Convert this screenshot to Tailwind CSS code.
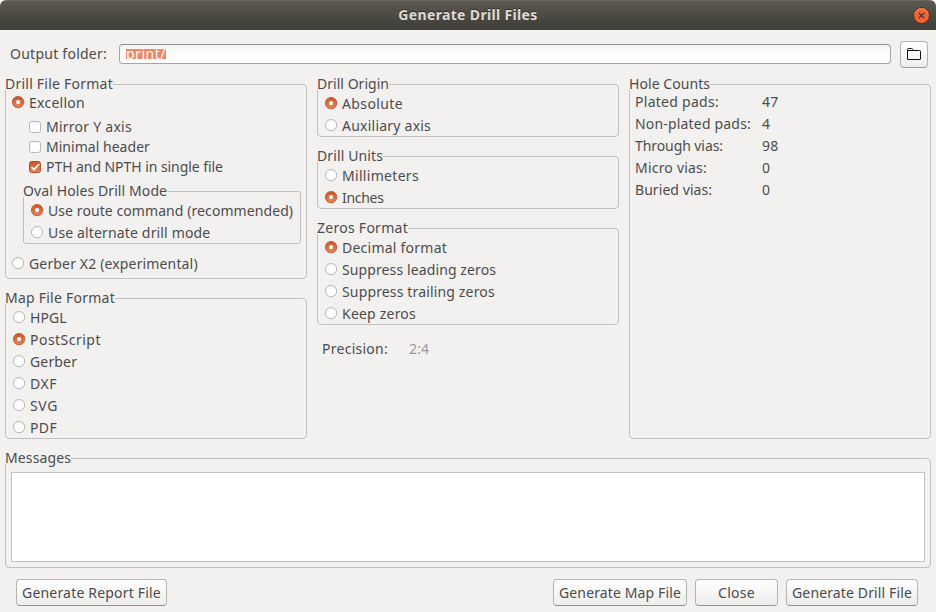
<!DOCTYPE html>
<html lang="en">
<head>
<meta charset="utf-8">
<title>Generate Drill Files</title>
<script src="https://cdn.jsdelivr.net/npm/@tailwindcss/browser@4"></script>
</head>
<body class="bg-white">
<svg class="absolute size-0">
  <defs>
    <linearGradient id="on" x1="0" y1="0" x2="0" y2="1"><stop offset="0" stop-color="#cc531f"/><stop offset="1" stop-color="#e58660"/></linearGradient>
    <linearGradient id="off" x1="0" y1="0" x2="0" y2="1"><stop offset="0" stop-color="#f6f6f5"/><stop offset=".4" stop-color="#ffffff"/></linearGradient>
    <symbol id="radio-on" viewBox="0 0 13 13"><circle cx="6.1" cy="6.1" r="5.7" fill="url(#on)" stroke="#b5512a" stroke-width=".8"/><circle cx="6.1" cy="6.1" r="2.1" fill="#fff"/></symbol>
    <symbol id="radio-off" viewBox="0 0 13 13"><circle cx="6.1" cy="6.1" r="5.6" fill="url(#off)" stroke="#b9b8b6" stroke-width="1"/></symbol>
    <symbol id="check-off" viewBox="0 0 13 13"><rect x=".5" y=".5" width="11" height="11" rx="2.2" fill="url(#off)" stroke="#b9b8b6"/></symbol>
    <symbol id="check-on" viewBox="0 0 13 13"><rect x=".5" y=".5" width="11" height="11" rx="2.2" fill="url(#on)" stroke="#b5512a"/><path d="M2.5 6.2 5 8.6 10.2 3" fill="none" stroke="#fff" stroke-width="1.7"/></symbol>
  </defs>
</svg>
<div class="flex h-[612px] w-[936px] flex-col overflow-hidden rounded-t-[6px] bg-[#f2f1f0] font-['Noto_Sans','Open_Sans',sans-serif] text-[14px] tracking-[0.15px] whitespace-nowrap text-[#4c4c4c]">
  <header class="grid h-[30px] shrink-0 grid-cols-[1fr_auto_1fr] items-center border-t border-[#6b6961] bg-linear-to-b from-[#5b5950] to-[#3d3c37] pr-[6px]">
    <span></span>
    <h1 class="-mt-[2px] pl-[6px] text-[14px] leading-[20px] font-bold tracking-[0.34px] text-[#dfdbd2] [text-shadow:0_-1px_0_#2f2e2a]">Generate Drill Files</h1>
    <svg class="-mt-[1px] size-[17px] justify-self-end" viewBox="0 0 17 17"><circle cx="8.5" cy="8.5" r="8" fill="#ee6233" stroke="#34332f"/><path d="M1.8 7a6.9 6.9 0 0 1 13.4 0" fill="none" stroke="#f6936c" stroke-width=".9"/><path d="M5.8 5.8l5.4 5.4M11.2 5.8l-5.4 5.4" stroke="#3d302a" stroke-width="1.2"/></svg>
  </header>

  <div class="flex h-[49px] shrink-0 items-center pr-[8px] pl-[10px]">
    <span class="-mt-[2px] w-[109px] tracking-[0.25px]">Output folder:</span>
    <div class="mb-[1px] flex h-[20px] w-[772px] items-center rounded-[4px] border border-[#a5a5a4] border-t-[#8f8f8e] bg-linear-to-b from-[#f3f3f3] to-white to-60% pl-[6px]">
      <span class="h-[10px] w-[40px] overflow-hidden bg-[#f08763] leading-[9px] tracking-[0.5px] text-white">print/</span>
    </div>
    <button class="ml-auto flex h-[27px] w-[28px] items-center justify-center rounded-[4px] border border-[#b4b3b1] border-b-[#9c9b99] bg-linear-to-b from-white to-[#ededec]">
      <svg class="mb-[1px] h-[12px] w-[14px]" viewBox="0 0 14 12" fill="none" stroke="#111" stroke-width="1"><path d="M.5 11v-9.5q0-1 1-1h3q.8 0 1.2 1l.6 1h6.2q1 0 1 1v7.5q0 .5-.5.5h-12q-.5 0-.5-.5zM.5 2.5h6"/></svg>
    </button>
  </div>

  <main class="flex h-[374px] shrink-0 gap-[10px] px-[5px]">
    <div class="flex w-[302px] flex-col gap-[14px]">
      <fieldset class="h-[200px] rounded-[4px] border border-[#c3c1bf] pl-[6px]">
        <legend class="-ml-[7px] h-[11px] leading-[9px] tracking-[0.23px]">Drill File Format</legend>
        <label class="flex h-[22px] items-center gap-[4px] pt-[2px]"><svg class="mt-[1px] size-[13px]"><use href="#radio-on"/></svg><span class="tracking-[0.27px]">Excellon</span></label>
        <div class="flex flex-col pt-[4px] pl-[17px]">
          <label class="flex h-[20px] items-center gap-[4px]"><svg class="mt-[2px] size-[13px]"><use href="#check-off"/></svg><span class="tracking-[0.25px]">Mirror Y axis</span></label>
          <label class="flex h-[20px] items-center gap-[4px]"><svg class="mt-[2px] size-[13px]"><use href="#check-off"/></svg><span class="tracking-[0.03px]">Minimal header</span></label>
          <label class="flex h-[20px] items-center gap-[4px]"><svg class="mt-[2px] size-[13px]"><use href="#check-on"/></svg><span class="tracking-[-0.06px]">PTH and NPTH in single file</span></label>
        </div>
        <fieldset class="mt-[10px] ml-[11px] h-[58px] w-[278px] rounded-[3px] border border-[#c3c1bf] pt-[2px] pl-[7px]">
          <legend class="-ml-[8px] h-[11px] leading-[9px] tracking-[0.1px]">Oval Holes Drill Mode</legend>
          <label class="flex h-[22px] items-center gap-[4px]"><svg class="size-[13px]"><use href="#radio-on"/></svg><span class="tracking-[0.08px]">Use route command (recommended)</span></label>
          <label class="flex h-[22px] items-center gap-[4px]"><svg class="size-[13px]"><use href="#radio-off"/></svg><span>Use alternate drill mode</span></label>
        </fieldset>
        <label class="mt-[8px] flex h-[22px] items-center gap-[4px]"><svg class="size-[13px]"><use href="#radio-off"/></svg><span>Gerber X2 (experimental)</span></label>
      </fieldset>
      <fieldset class="h-[146px] rounded-[4px] border border-[#c3c1bf] pt-[2px] pl-[7px]">
        <legend class="-ml-[8px] h-[11px] leading-[9px] tracking-[0.24px]">Map File Format</legend>
        <label class="flex h-[22px] items-center gap-[4px]"><svg class="size-[13px]"><use href="#radio-off"/></svg><span class="tracking-[0.05px]">HPGL</span></label>
        <label class="flex h-[22px] items-center gap-[4px]"><svg class="size-[13px]"><use href="#radio-on"/></svg><span class="tracking-[0.48px]">PostScript</span></label>
        <label class="flex h-[22px] items-center gap-[4px]"><svg class="size-[13px]"><use href="#radio-off"/></svg><span>Gerber</span></label>
        <label class="flex h-[22px] items-center gap-[4px]"><svg class="size-[13px]"><use href="#radio-off"/></svg><span class="tracking-[0.5px]">DXF</span></label>
        <label class="flex h-[22px] items-center gap-[4px]"><svg class="size-[13px]"><use href="#radio-off"/></svg><span class="tracking-[0.6px]">SVG</span></label>
        <label class="flex h-[22px] items-center gap-[4px]"><svg class="size-[13px]"><use href="#radio-off"/></svg><span class="tracking-[0.35px]">PDF</span></label>
      </fieldset>
    </div>

    <div class="flex w-[302px] flex-col gap-[14px]">
      <fieldset class="h-[58px] rounded-[4px] border border-[#c3c1bf] pt-[2px] pl-[7px]">
        <legend class="-ml-[8px] h-[11px] leading-[9px] tracking-[0.03px]">Drill Origin</legend>
        <label class="flex h-[22px] items-center gap-[4px]"><svg class="size-[13px]"><use href="#radio-on"/></svg><span class="tracking-[0.38px]">Absolute</span></label>
        <label class="flex h-[22px] items-center gap-[4px]"><svg class="size-[13px]"><use href="#radio-off"/></svg><span class="tracking-[0.23px]">Auxiliary axis</span></label>
      </fieldset>
      <fieldset class="h-[58px] rounded-[4px] border border-[#c3c1bf] pt-[2px] pl-[7px]">
        <legend class="-ml-[8px] h-[11px] leading-[9px] tracking-[0.11px]">Drill Units</legend>
        <label class="flex h-[22px] items-center gap-[4px]"><svg class="size-[13px]"><use href="#radio-off"/></svg><span class="tracking-[0.31px]">Millimeters</span></label>
        <label class="flex h-[22px] items-center gap-[4px]"><svg class="size-[13px]"><use href="#radio-on"/></svg><span class="tracking-[-0.3px]">Inches</span></label>
      </fieldset>
      <fieldset class="h-[102px] rounded-[4px] border border-[#c3c1bf] pt-[2px] pl-[7px]">
        <legend class="-ml-[8px] h-[11px] leading-[9px] tracking-[0.27px]">Zeros Format</legend>
        <label class="flex h-[22px] items-center gap-[4px]"><svg class="size-[13px]"><use href="#radio-on"/></svg><span class="tracking-[0.24px]">Decimal format</span></label>
        <label class="flex h-[22px] items-center gap-[4px]"><svg class="size-[13px]"><use href="#radio-off"/></svg><span class="tracking-[0.11px]">Suppress leading zeros</span></label>
        <label class="flex h-[22px] items-center gap-[4px]"><svg class="size-[13px]"><use href="#radio-off"/></svg><span>Suppress trailing zeros</span></label>
        <label class="flex h-[22px] items-center gap-[4px]"><svg class="size-[13px]"><use href="#radio-off"/></svg><span class="tracking-[0.21px]">Keep zeros</span></label>
      </fieldset>
      <div class="-mt-[2px] flex h-[22px] items-center pl-[5px]"><span class="w-[87px] tracking-[0.26px]">Precision:</span><span class="text-[#9a9997]">2:4</span></div>
    </div>

    <fieldset class="h-[360px] w-[302px] rounded-[4px] border border-[#c3c1bf] pl-[5px]">
      <legend class="-ml-[6px] h-[11px] leading-[9px] tracking-[0.06px]">Hole Counts</legend>
      <dl class="grid auto-rows-[22px] grid-cols-[127px_auto] items-center">
        <dt class="tracking-[0.28px]">Plated pads:</dt><dd>47</dd>
        <dt class="tracking-[0.18px]">Non-plated pads:</dt><dd>4</dd>
        <dt class="tracking-[-0.08px]">Through vias:</dt><dd>98</dd>
        <dt class="tracking-[0.21px]">Micro vias:</dt><dd>0</dd>
        <dt class="tracking-[0.06px]">Buried vias:</dt><dd>0</dd>
      </dl>
    </fieldset>
  </main>

  <fieldset class="mx-[5px] h-[115px] shrink-0 rounded-[4px] border border-[#c3c1bf] px-[5px] pt-[8px]">
    <legend class="-ml-[6px] h-[11px] leading-[9px] tracking-[0.12px]">Messages</legend>
    <div class="h-[90px] border border-[#c3c1bf] bg-white"></div>
  </fieldset>

  <footer class="flex h-[44px] shrink-0 items-center gap-[8px] pt-[5px] pr-[18px] pl-[16px]">
    <button class="mr-auto h-[27px] w-[151px] rounded-[4px] border border-[#b4b3b1] border-b-[#93928f] bg-linear-to-b from-white to-[#ededec] tracking-[0.19px]">Generate Report File</button>
    <button class="h-[27px] w-[134px] rounded-[4px] border border-[#b4b3b1] border-b-[#93928f] bg-linear-to-b from-white to-[#ededec] tracking-[0.13px]">Generate Map File</button>
    <button class="h-[27px] w-[83px] rounded-[4px] border border-[#b4b3b1] border-b-[#93928f] bg-linear-to-b from-white to-[#ededec] tracking-[0.29px]">Close</button>
    <button class="h-[27px] w-[132px] rounded-[4px] border border-[#b4b3b1] border-b-[#93928f] bg-linear-to-b from-white to-[#ededec] tracking-[0.13px]">Generate Drill File</button>
  </footer>
</div>
</body>
</html>
